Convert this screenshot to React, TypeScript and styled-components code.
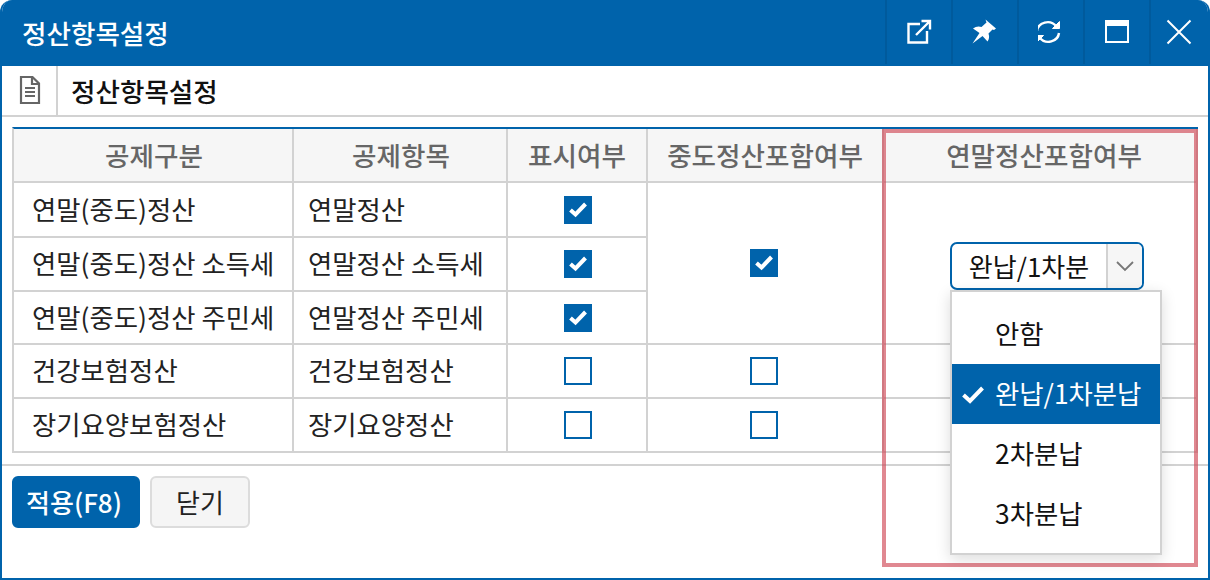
import React, { FC } from "react";
import styled, { createGlobalStyle } from "styled-components";

const Global = createGlobalStyle`
  html, body { margin: 0; padding: 0; background: #fff; }
  * { box-sizing: border-box; }
  body { font-family: "Noto Sans CJK KR", "Noto Sans", sans-serif; font-size: 26.4px; color: #222; }
`;

const BLUE = "#0063ab";
const LINE = "#d2d2d2";

const Win = styled.div`
  position: relative;
  width: 1210px;
  height: 580px;
  background: #fff;
  border: 2px solid ${BLUE};
  border-top: 0;
  border-radius: 12px 12px 0 0;
  display: flex;
  flex-direction: column;
  overflow: hidden;
`;

const TitleBar = styled.div`
  height: 66px;
  margin: 0 -2px;
  padding-left: 22px;
  background: ${BLUE};
  display: flex;
  align-items: center;
  flex: none;
`;

const Title = styled.div`
  flex: 1;
  color: #fff;
  font-size: 26.6px;
  font-weight: 500;
  line-height: 66px;
`;

const WinBtn = styled.div`
  width: 66px;
  height: 64px;
  margin-bottom: 2px;
  border-left: 2px solid #005a9c;
  display: flex;
  align-items: center;
  justify-content: center;
  color: #fff;
  &:last-child {
    width: 61px;
    padding-right: 4px;
  }
`;

const ToolRow = styled.div`
  height: 51px;
  flex: none;
  display: flex;
  align-items: stretch;
  border-bottom: 2px solid ${LINE};
`;

const DocCell = styled.div`
  width: 56px;
  border-right: 2px solid ${LINE};
  display: flex;
  align-items: center;
  justify-content: center;
  padding: 0 0 2px 1px;
  color: #666;
`;

const ToolTitle = styled.div`
  padding-left: 13px;
  font-size: 26.6px;
  font-weight: 500;
  line-height: 49px;
  color: #111;
`;

const Body = styled.div`
  padding: 10px 10px 11px;
  flex: none;
`;

const Grid = styled.table`
  width: 1186px;
  table-layout: fixed;
  border-collapse: separate;
  border-spacing: 0;
  border-top: 2px solid ${BLUE};
  border-left: 2px solid ${LINE};
`;

const Th = styled.th`
  height: 54px;
  padding: 0 0 2px;
  background: #f6f6f6;
  border-right: 2px solid ${LINE};
  border-bottom: 2px solid ${LINE};
  color: #666;
  font-size: 26.6px;
  font-weight: 500;
  text-align: center;
  &:first-child,
  &:nth-child(2) {
    padding-left: 2px;
  }
  &:last-child {
    padding-left: 8px;
  }
`;

const Td = styled.td<{ $center?: boolean; $h?: number }>`
  height: ${(p) => p.$h ?? 54}px;
  padding: ${(p) => (p.$center ? "0" : "0 0 2px 14px")};
  border-right: 2px solid ${LINE};
  border-bottom: 2px solid ${LINE};
  font-size: 26.4px;
  line-height: 36px;
  color: #222;
  text-align: ${(p) => (p.$center ? "center" : "left")};
  vertical-align: middle;
  white-space: nowrap;
`;

const FirstTd = styled(Td)`
  padding-left: 18px;
`;

const ShowTd = styled(Td)`
  padding-left: 2px;
`;

const MidTd = styled(Td)`
  padding-right: 2px;
`;

const Box = styled.span<{ $on?: boolean }>`
  display: flex;
  width: 28px;
  height: 28px;
  margin: 0 auto;
  align-items: center;
  justify-content: center;
  background: ${(p) => (p.$on ? BLUE : "#fff")};
  border: 2px solid ${BLUE};
`;

const Combo = styled.div`
  display: inline-flex;
  width: 194px;
  height: 48px;
  margin: 6px 0 0 14px;
  border: 2px solid ${BLUE};
  border-radius: 7px;
  overflow: hidden;
  vertical-align: middle;
`;

const ComboText = styled.div`
  flex: 1;
  font-size: 26px;
  line-height: 44px;
  text-align: center;
  color: #111;
`;

const ComboArrow = styled.div`
  width: 36px;
  background: #f6f6f6;
  border-left: 2px solid ${LINE};
  display: flex;
  align-items: center;
  justify-content: center;
  color: #777;
`;

const Footer = styled.div`
  border-top: 2px solid ${LINE};
  padding: 10px;
  display: flex;
  gap: 10px;
`;

const Btn = styled.div<{ $primary?: boolean }>`
  height: 52px;
  width: ${(p) => (p.$primary ? "128px" : "100px")};
  padding-right: ${(p) => (p.$primary ? "4px" : "0")};
  border-radius: 6px;
  border: 2px solid ${(p) => (p.$primary ? BLUE : "#dcdcdc")};
  background: ${(p) => (p.$primary ? BLUE : "#f5f5f5")};
  color: ${(p) => (p.$primary ? "#fff" : "#222")};
  font-size: 26px;
  font-weight: ${(p) => (p.$primary ? 500 : 400)};
  line-height: 47px;
  text-align: center;
  white-space: nowrap;
`;

const Menu = styled.div`
  position: absolute;
  left: 948px;
  top: 290px;
  width: 212px;
  height: 265px;
  padding: 12px 0 0;
  background: #fff;
  border: 2px solid ${LINE};
  box-shadow: 0 4px 14px rgba(0, 0, 0, 0.14);
`;

const MenuItem = styled.div<{ $on?: boolean }>`
  position: relative;
  height: 60px;
  padding-left: 43px;
  font-size: 26.4px;
  line-height: 58px;
  color: ${(p) => (p.$on ? "#fff" : "#111")};
  background: ${(p) => (p.$on ? BLUE : "transparent")};
`;

const MenuCheck = styled.svg`
  position: absolute;
  left: 9px;
  top: 21px;
`;

const Highlight = styled.div`
  position: absolute;
  left: 880px;
  top: 129px;
  width: 316px;
  height: 438px;
  border: 4px solid rgba(208, 72, 86, 0.65);
  pointer-events: none;
`;

const Check: FC = () => (
  <svg width="20" height="18" viewBox="0 0 20 18">
    <path d="M2.5 9 L7.5 13.5 L17.5 3" fill="none" stroke="#fff" strokeWidth="4" />
  </svg>
);

const rows = [
  { h: 55, kind: "연말(중도)정산", item: "연말정산", show: true },
  { h: 54, kind: "연말(중도)정산 소득세", item: "연말정산 소득세", show: true },
  { h: 53, kind: "연말(중도)정산 주민세", item: "연말정산 주민세", show: true },
  { h: 54, kind: "건강보험정산", item: "건강보험정산", show: false },
  { h: 54, kind: "장기요양보험정산", item: "장기요양정산", show: false },
];

export default function App() {
  return (
    <>
      <Global />
      <Win>
        <TitleBar>
          <Title>정산항목설정</Title>
          <WinBtn>
            <svg width="26" height="26" viewBox="0 0 26 26" fill="none" stroke="currentColor" strokeWidth="2.4">
              <path d="M14 5H2.5V23.5H21V12" />
              <path d="M10 16L23.5 2.5M15.5 2H24V10.5" />
            </svg>
          </WinBtn>
          <WinBtn>
            <svg width="26" height="26" viewBox="0 0 26 26" fill="currentColor">
              <path d="M13.5 0.5 L24 9.5 L22 11 L20.5 10.5 L16.5 14.5 Q18 19 15.5 22.5 L10.5 17 L0.5 24.5 L7.5 14 L1 9.5 Q5 6.5 9.5 8 L14.5 3.5 Z" />
            </svg>
          </WinBtn>
          <WinBtn>
            <svg width="26" height="26" viewBox="3 0 26 26" fill="none" stroke="currentColor" strokeWidth="2.4">
              <path d="M2 12 C3 3.5 15 -0.5 21.5 7.5" />
              <path d="M24 14 C23 22.5 11 26.5 4.5 18.5" />
              <path d="M24.5 2.5V9.5H17.5Z" fill="currentColor" strokeWidth="1" />
              <path d="M1.5 23.5V16.5H8.5Z" fill="currentColor" strokeWidth="1" />
            </svg>
          </WinBtn>
          <WinBtn>
            <svg width="26" height="26" viewBox="0 0 26 26" fill="none" stroke="currentColor">
              <rect x="2" y="2" width="22" height="21" strokeWidth="2" />
              <path d="M1 4.5H25" strokeWidth="5" />
            </svg>
          </WinBtn>
          <WinBtn>
            <svg width="26" height="26" viewBox="0 0 26 26" fill="none" stroke="currentColor" strokeWidth="2">
              <path d="M1.5 1.5L24.5 24.5M24.5 1.5L1.5 24.5" />
            </svg>
          </WinBtn>
        </TitleBar>
        <ToolRow>
          <DocCell>
            <svg width="22" height="30" viewBox="0 0 22 30" fill="none" stroke="currentColor" strokeWidth="2.2">
              <path d="M2 2H13.5L20 8.5V28H2Z" />
              <path d="M13 2V9H20" />
              <path d="M6 13H16M6 17H16M6 21H16" />
            </svg>
          </DocCell>
          <ToolTitle>정산항목설정</ToolTitle>
        </ToolRow>
        <Body>
          <Grid>
            <colgroup>
              <col style={{ width: 280 }} />
              <col style={{ width: 214 }} />
              <col style={{ width: 140 }} />
              <col style={{ width: 236 }} />
              <col />
            </colgroup>
            <thead>
              <tr>
                <Th>공제구분</Th>
                <Th>공제항목</Th>
                <Th>표시여부</Th>
                <Th>중도정산포함여부</Th>
                <Th>연말정산포함여부</Th>
              </tr>
            </thead>
            <tbody>
              {rows.map((r, idx) => (
                <tr key={idx}>
                  <FirstTd $h={r.h}>{r.kind}</FirstTd>
                  <Td $h={r.h}>{r.item}</Td>
                  <ShowTd $center $h={r.h}>
                    <Box $on={r.show}>{r.show && <Check />}</Box>
                  </ShowTd>
                  {idx === 0 && (
                    <MidTd $center rowSpan={3}>
                      <Box $on>
                        <Check />
                      </Box>
                    </MidTd>
                  )}
                  {idx > 2 && (
                    <MidTd $center>
                      <Box />
                    </MidTd>
                  )}
                  {idx === 0 && (
                    <Td $center rowSpan={3}>
                      <Combo>
                        <ComboText>완납/1차분</ComboText>
                        <ComboArrow>
                          <svg width="20" height="12" viewBox="0 0 20 12" fill="none" stroke="currentColor" strokeWidth="1.8">
                            <path d="M2 2L10 10L18 2" />
                          </svg>
                        </ComboArrow>
                      </Combo>
                    </Td>
                  )}
                  {idx > 2 && <Td $center />}
                </tr>
              ))}
            </tbody>
          </Grid>
        </Body>
        <Footer>
          <Btn $primary>적용(F8)</Btn>
          <Btn>닫기</Btn>
        </Footer>
        <Highlight />
        <Menu>
          <MenuItem>안함</MenuItem>
          <MenuItem $on>
            <MenuCheck width="24" height="20" viewBox="0 0 24 20">
              <path d="M2.5 10 L9 16 L21.5 3" fill="none" stroke="#fff" strokeWidth="4" />
            </MenuCheck>
            완납/1차분납
          </MenuItem>
          <MenuItem>2차분납</MenuItem>
          <MenuItem>3차분납</MenuItem>
        </Menu>
      </Win>
    </>
  );
}
